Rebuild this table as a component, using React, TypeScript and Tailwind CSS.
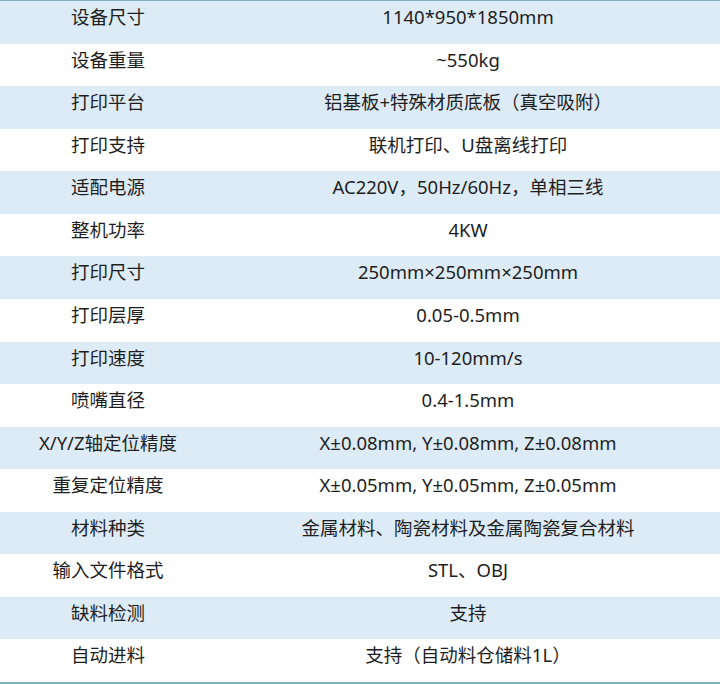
const rows: [string, string][] = [
  ["设备尺寸", "1140*950*1850mm"],
  ["设备重量", "~550kg"],
  ["打印平台", "铝基板+特殊材质底板（真空吸附）"],
  ["打印支持", "联机打印、U盘离线打印"],
  ["适配电源", "AC220V，50Hz/60Hz，单相三线"],
  ["整机功率", "4KW"],
  ["打印尺寸", "250mm×250mm×250mm"],
  ["打印层厚", "0.05-0.5mm"],
  ["打印速度", "10-120mm/s"],
  ["喷嘴直径", "0.4-1.5mm"],
  ["X/Y/Z轴定位精度", "X±0.08mm, Y±0.08mm, Z±0.08mm"],
  ["重复定位精度", "X±0.05mm, Y±0.05mm, Z±0.05mm"],
  ["材料种类", "金属材料、陶瓷材料及金属陶瓷复合材料"],
  ["输入文件格式", "STL、OBJ"],
  ["缺料检测", "支持"],
  ["自动进料", "支持（自动料仓储料1L）"],
];

export default function App() {
  return (
    <div
      className="w-[720px] h-[684px] bg-white border-t border-b-2 border-[#7fb0bd] grid grid-rows-[repeat(16,1fr)] text-[18.5px] text-[#1e1e1e]"
      style={{ fontFamily: '"Noto Sans", "Noto Sans CJK SC", sans-serif' }}
    >
      {rows.map(([k, v], i) => (
        <div
          key={k}
          className={`grid grid-cols-[216px_1fr] items-center pb-[10px] leading-none ${
            i % 2 === 0 ? "bg-[#ddebf7]" : "bg-white"
          }`}
        >
          <div className="text-center">{k}</div>
          <div className="text-center">{v}</div>
        </div>
      ))}
    </div>
  );
}
